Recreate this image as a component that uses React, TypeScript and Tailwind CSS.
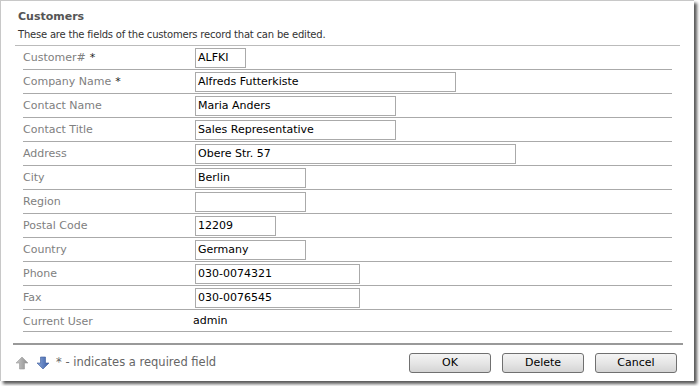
import React from "react";

const font = { fontFamily: '"DejaVu Sans", Verdana, sans-serif' };

type Field = { label: string; req?: boolean; value: string; w: number; plain?: boolean };

const fields: Field[] = [
  { label: "Customer#", req: true, value: "ALFKI", w: 51 },
  { label: "Company Name", req: true, value: "Alfreds Futterkiste", w: 261 },
  { label: "Contact Name", value: "Maria Anders", w: 201 },
  { label: "Contact Title", value: "Sales Representative", w: 201 },
  { label: "Address", value: "Obere Str. 57", w: 321 },
  { label: "City", value: "Berlin", w: 111 },
  { label: "Region", value: "", w: 111 },
  { label: "Postal Code", value: "12209", w: 81 },
  { label: "Country", value: "Germany", w: 111 },
  { label: "Phone", value: "030-0074321", w: 165 },
  { label: "Fax", value: "030-0076545", w: 165 },
  { label: "Current User", value: "admin", w: 0, plain: true },
];

function UpArrow() {
  return (
    <svg width="14" height="14" viewBox="0 0 14 14">
      <defs>
        <linearGradient id="ug" x1="0" y1="0" x2="1" y2="0">
          <stop offset="0" stopColor="#c8c8c8" />
          <stop offset="1" stopColor="#8e8e8e" />
        </linearGradient>
      </defs>
      <path d="M7 1 L13 7 L9.5 7 L9.5 13 L4.5 13 L4.5 7 L1 7 Z" fill="url(#ug)" stroke="#9a9a9a" strokeWidth="0.6" />
    </svg>
  );
}

function DownArrow() {
  return (
    <svg width="14" height="14" viewBox="0 0 14 14">
      <defs>
        <linearGradient id="dg" x1="0" y1="0" x2="1" y2="0">
          <stop offset="0" stopColor="#8aa6d8" />
          <stop offset="1" stopColor="#3a5ea8" />
        </linearGradient>
      </defs>
      <path d="M4.5 1 L9.5 1 L9.5 7 L13 7 L7 13 L1 7 L4.5 7 Z" fill="url(#dg)" stroke="#3c5c9c" strokeWidth="0.6" />
    </svg>
  );
}

function Btn({ children }: { children: React.ReactNode }) {
  return (
    <div className="w-[82px] h-[20px] rounded-[3px] border border-[#707070] bg-gradient-to-b from-[#f4f4f4] via-[#e6e6e6] to-[#d4d4d4] flex items-center justify-center text-[11px] text-black">
      {children}
    </div>
  );
}

export default function App() {
  return (
    <div className="w-[700px] h-[386px] bg-white relative overflow-hidden" style={font}>
      <div className="w-[694px] h-[381px] bg-white border-t border-l border-[#c8c8c8] shadow-[3px_3px_3px_rgba(0,0,0,0.65)] flex flex-col">
        <div className="pl-[17px] pt-[9px]">
          <div className="text-[11px] font-bold text-[#555] leading-[14px]">Customers</div>
          <div className="text-[10px] tracking-[-0.2px] text-[#333] leading-[13px] mt-[4px]">
            These are the fields of the customers record that can be edited.
          </div>
        </div>
        <div className="ml-[14px] w-[665px] h-px bg-[#bbb] mt-[4px]" />
        <div className="ml-[22px] w-[649px] flex flex-col">
          {fields.map((f, i) => (
            <div
              key={f.label}
              className={`flex border-b border-[#aaa] ${i === fields.length - 1 ? "h-[22px]" : "h-[24px]"}`}
            >
              <div className="w-[172px] shrink-0 text-[11px] text-[#808080] pt-[5px] leading-[14px]">
                {f.label}
                {f.req && <span className="text-[#222] ml-[4px]">*</span>}
              </div>
              {f.plain ? (
                <div className="text-[11px] text-black pt-[4px] leading-[14px] -ml-[2px]">{f.value}</div>
              ) : (
                <div className="pt-[2px]">
                  <div
                    className="h-[20px] border border-[#aaa] text-[11px] text-black leading-[18px] pl-[2px]"
                    style={{ width: f.w }}
                  >
                    {f.value}
                  </div>
                </div>
              )}
            </div>
          ))}
        </div>
        <div className="ml-[12px] w-[670px] h-[2px] bg-[#999] mt-[11px]" />
        <div className="flex items-center mt-[8px] pl-[14px] pr-[17px]">
          <div className="flex items-center gap-[7px]">
            <UpArrow />
            <DownArrow />
          </div>
          <div className="ml-[6px] text-[11.5px] text-[#666]">* - indicates a required field</div>
          <div className="ml-auto flex gap-[11px]">
            <Btn>OK</Btn>
            <Btn>Delete</Btn>
            <Btn>Cancel</Btn>
          </div>
        </div>
      </div>
    </div>
  );
}
